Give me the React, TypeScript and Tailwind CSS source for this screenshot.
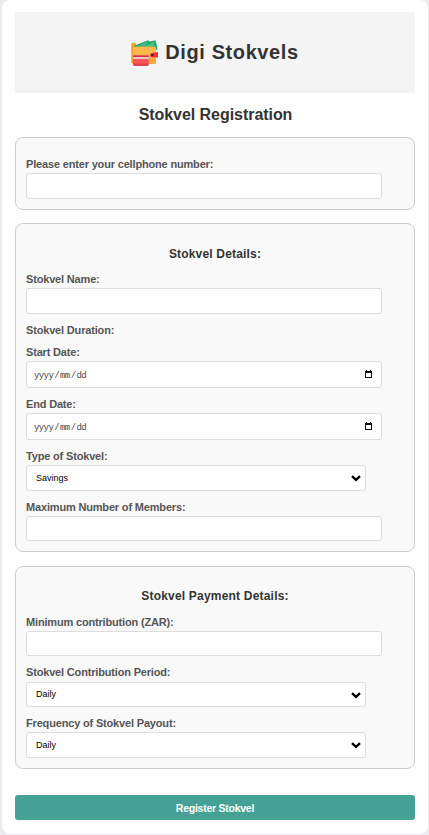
import React from "react";

function Label({ children, className = "" }: { children: React.ReactNode; className?: string }) {
  return (
    <label className={`block h-[15px] whitespace-nowrap text-[11px] leading-[12px] font-bold tracking-[-0.17px] text-[#555] ${className}`}>
      {children}
    </label>
  );
}

function TextBox({ className = "h-[26px]" }: { className?: string }) {
  return <input type="text" className={`block w-[356px] rounded-[3px] border border-[#ddd] bg-white px-2 text-[9px] outline-none ${className}`} />;
}

function DateBox() {
  return (
    <div className="flex h-[27px] w-[356px] items-center justify-between rounded-[3px] border border-[#ddd] bg-white pr-[9px] pl-[7px] text-[#444]">
      <span className="flex gap-px pt-[2px] font-['Liberation_Mono',monospace] text-[9px] leading-[10px] tracking-[-0.6px]">
        <span>yyyy</span>
        <span>/</span>
        <span>mm</span>
        <span>/</span>
        <span>dd</span>
      </span>
      <svg width="7" height="8" viewBox="0 0 7 8" className="mb-px" shapeRendering="crispEdges">
        <path d="M1 0h1v1h3V0h1v1h1v7H0V1h1zM1 3v4h5V3z" fill="#111" fillRule="evenodd" />
      </svg>
    </div>
  );
}

function SelectBox({ value, className = "h-[26px]" }: { value: string; className?: string }) {
  return (
    <div className={`relative w-[340px] rounded-[3px] border border-[#ddd] bg-white ${className}`}>
      <select className="block h-full w-full appearance-none bg-transparent pt-px pl-[9px] text-[9px] text-black outline-none">
        <option>{value}</option>
      </select>
      <svg width="10" height="7" viewBox="0 0 10 7" className="pointer-events-none absolute top-[9px] right-1">
        <path d="M1 1.2 5 4.9 9 1.2" fill="none" stroke="#000" strokeWidth="2.3" />
      </svg>
    </div>
  );
}

function Wallet() {
  return (
    <svg width="28" height="28" viewBox="0 0 28 28">
      <rect x="0.3" y="3.700" width="5" height="21.300" rx="2" fill="#fb9a27" />
      <path d="M2.500 7 17 1.200l1.500 1.300 6-1.300.8 2.800 1.200 6.500-1.500.5-2-3H3z" fill="#27a877" />
      <path d="M8 6.500 16.500 3 14 6.500zM14 7l9.500-4-1 4z" fill="#3fc78d" />
      <path d="M2 7.500h21q2 0 2 2V23q0 2-2 2H4q-2 0-2-2z" fill="#ffb74c" />
      <path d="M18 19.500h7V23q0 2-2 2h-5z" fill="#fda83a" />
      <path d="M2 16.500h15.700V25q0 2-2 2H4q-2 0-2-2z" fill="#fb5457" />
      <path d="M2 16.500h15.700v1.500H2z" fill="#d62e46" />
      <path d="M2 18h15.700v2H2z" fill="#f0c9c4" />
      <path d="M2 24.500h15.700q0 2.500-2 2.500H4q-2 0-2-2z" fill="#e34350" />
      <path d="m21 14 6-1v5.500h-6q-2-.5-2-2.250T21 14z" fill="#e23549" />
      <rect x="20" y="15" width="2.500" height="2" fill="#5a2630" />
    </svg>
  );
}

export default function App() {
  return (
    <div className="h-[835px] w-[429px] bg-[#ebebf0] pr-px pl-[2px] font-['Liberation_Sans',Arial,sans-serif]">
      <main className="h-[834px] rounded-lg bg-white px-[13px] pt-3">
        <header className="flex h-[81px] items-center justify-center bg-[#f4f4f4] text-[#333]">
          <Wallet />
          <h1 className="mb-[2px] ml-[6px] text-[20px] leading-6 font-bold tracking-[0.6px]">Digi Stokvels</h1>
        </header>
        <h2 className="mt-[13px] h-[31px] pl-px text-center text-[16px] leading-[18px] font-bold tracking-[-0.05px] text-[#333]">Stokvel Registration</h2>

        <section className="h-[73px] rounded-lg border border-[#ccc] bg-[#f9f9f9] px-[10px] pt-5">
          <Label>Please enter your cellphone number:</Label>
          <TextBox />
        </section>

        <section className="mt-[13px] h-[329px] rounded-lg border border-[#ccc] bg-[#f9f9f9] px-[10px] pt-[23px]">
          <h3 className="h-[26px] text-center text-[12px] leading-[14px] font-bold tracking-[0.18px] text-[#333]">Stokvel Details:</h3>
          <Label>Stokvel Name:</Label>
          <TextBox />
          <Label className="mt-[10px]">Stokvel Duration:</Label>
          <Label className="mt-[7px]">Start Date:</Label>
          <DateBox />
          <Label className="mt-[10px]">End Date:</Label>
          <DateBox />
          <Label className="mt-[10px]">Type of Stokvel:</Label>
          <SelectBox value="Savings" />
          <Label className="mt-[10px]">Maximum Number of Members:</Label>
          <TextBox className="h-[25px]" />
        </section>

        <section className="mt-[14px] h-[203px] rounded-lg border border-[#ccc] bg-[#f9f9f9] px-[10px] pt-[22px]">
          <h3 className="h-[27px] text-center text-[12px] leading-[14px] font-bold tracking-[0.2px] text-[#333]">Stokvel Payment Details:</h3>
          <Label>Minimum contribution (ZAR):</Label>
          <TextBox className="h-[25px]" />
          <Label className="mt-[10px] mb-px">Stokvel Contribution Period:</Label>
          <SelectBox value="Daily" className="h-[25px]" />
          <Label className="mt-[10px]">Frequency of Stokvel Payout:</Label>
          <SelectBox value="Daily" />
        </section>

        <button className="mt-[26px] block h-[25px] w-full rounded-[3px] bg-[#45a195] pt-px text-[10.5px] leading-6 font-bold tracking-[-0.25px] text-white">
          Register Stokvel
        </button>
      </main>
    </div>
  );
}
